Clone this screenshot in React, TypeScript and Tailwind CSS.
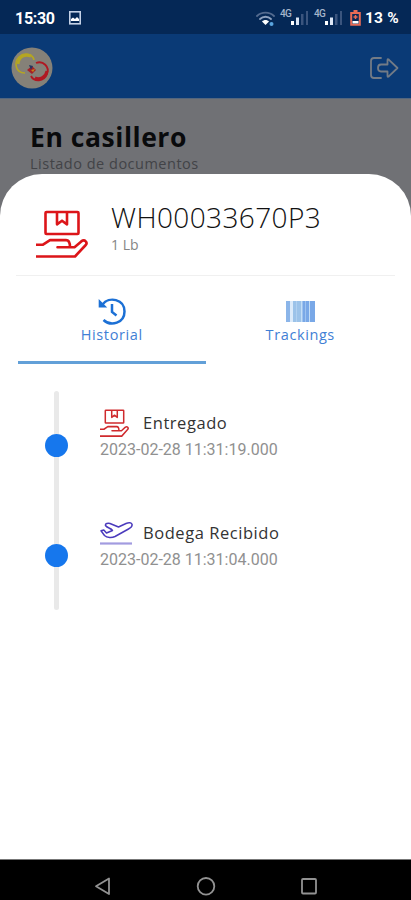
import clsx from 'clsx';

const events = [
  { title: 'Entregado', date: '2023-02-28 11:31:19.000', icon: 'hand' },
  { title: 'Bodega Recibido', date: '2023-02-28 11:31:04.000', icon: 'plane' },
];

function HandBoxIcon({ className }: { className?: string }) {
  return (
    <svg
      viewBox="0 0 52 47"
      preserveAspectRatio="none"
      fill="none"
      stroke="currentColor"
      strokeLinejoin="round"
      className={className}
    >
      <rect x="9.5" y="2" width="33" height="21.5" rx="1" />
      <path d="M21 2v12l5-3.500 5 3.500V2" />
      <path d="M0 34h7l7-4.500h16c3.500 0 4 4 4 7H21.500h17l6.500-5.500c4-3 7 1 4.500 3.500L39 45.500H0" />
    </svg>
  );
}

function PlaneIcon({ className }: { className?: string }) {
  return (
    <svg viewBox="0 0 33 25" fill="none" className={className}>
      <path
        d="M1 9.800l2.800-.8L6.500 12l6-2.500C11 7 7 7 5.500 4.500 5 2.500 8 2 10 2.500l8.500 3.500L26 2.500c3-1.200 5.500-.8 6 .8.5 2-1.500 3.700-3.500 4.700L15 15.500c-3 1.500-8 1.500-10.500-1L1 9.800z"
        stroke="#4b3bbd"
        strokeWidth="1.500"
        strokeLinejoin="round"
      />
      <path d="M0 22.500h32" stroke="#a29be0" strokeWidth="2.200" />
    </svg>
  );
}

function Signal() {
  return (
    <div className="flex items-start">
      <span className="-mt-px w-[11px] text-[10px] leading-[10px] font-medium tracking-[-0.8px] text-[#a6b5cb]">4G</span>
      <svg viewBox="0 0 18 16" className="h-4 w-[18px]">
        <path d="M0 11h3v4H0z" fill="#fff" />
        <path d="M5 7.500h3V15H5z" fill="#dce6f5" />
        <path d="M10 4h2.500v11H10zM15 1h2v14h-2z" fill="#3b557e" />
      </svg>
    </div>
  );
}

function StatusBar() {
  return (
    <div className="flex h-[34px] items-center bg-[#052856] pl-[15px] font-['Roboto',sans-serif] text-white">
      <span className="w-[54px] pt-[3px] text-[16px] leading-5 font-bold tracking-[-0.300px]">15:30</span>
      <svg viewBox="0 0 12 14" className="mt-0.5 h-3.5 w-3" fill="none">
        <rect x=".8" y=".8" width="10.400" height="12" stroke="#c4d1e6" strokeWidth="1.600" />
        <path d="M2 10V8l2-1.500L6 8l2-2 2 2v2z" fill="#fff" />
      </svg>
      <svg viewBox="0 0 19 17" className="mt-1 ml-[175px] h-[17px] w-[19px]" fill="none" strokeLinecap="round">
        <path d="M1 5c4.500-4.500 12.500-4.500 17 0" stroke="#546b8f" strokeWidth="1.800" />
        <path d="M4 8c3-3 8-3 11 0" stroke="#8fa2bf" strokeWidth="1.800" />
        <path d="M6 10.500c2-2 5-2 7 0L9.500 14z" fill="#fff" />
        <circle cx="15.500" cy="13" r="2" fill="#5aa5df" />
      </svg>
      <div className="mt-px ml-[5px] flex gap-[5px]">
        <Signal />
        <Signal />
      </div>
      <svg viewBox="0 0 11 16" className="mt-0.5 ml-[7px] h-4 w-[11px]" fill="none">
        <path d="M3.500 0h4v2h-4z" fill="#e86b55" />
        <path d="M1.200 3h8.600v11.800H1.200z" stroke="#e86b55" strokeWidth="2" />
        <path d="M5.500 5v4M3.500 7h4" stroke="#e86b55" strokeWidth="1.500" />
        <path d="M2.500 11h6v2.500h-6z" fill="#fff" />
      </svg>
      <span className="ml-[4px] pt-[2px] text-[15.500px] leading-5 font-bold whitespace-nowrap tracking-[0.200px]">13 %</span>
    </div>
  );
}

function Header() {
  return (
    <header className="flex h-[65px] items-center justify-between border-b border-[#53667f] bg-[#0a3a76] pr-[12px] pl-[11px]">
      <svg viewBox="0 0 42 42" className="mt-[3px] h-[42px] w-[42px]" fill="none">
        <circle cx="21" cy="21" r="20.500" fill="#858178" />
        <path d="M14 26C4 26 3 15 8 10c5-5 14-3 15 3" stroke="#b5a622" strokeWidth="1.700" />
        <path d="M7 17C8 9 14 7 20 9" stroke="#b5a622" strokeWidth="3" />
        <path d="M25 16c7-3 14 4 11 11-3 8-13 8-16 2" stroke="#b01822" strokeWidth="1.900" />
        <path d="M36 24c-1 6-7 9-12 7" stroke="#b01822" strokeWidth="3" />
        <path d="M16 23l5-4 4 4-4 4z" fill="#a51f25" />
        <path d="M18 18l4 1-2 4z" fill="#26355f" />
        <path d="M20 23l4-1-2 3z" fill="#c78119" />
      </svg>
      <svg viewBox="0 0 29 22" className="mt-[4px] h-[22px] w-[29px]" fill="none" stroke="#737b86" strokeWidth="1.800" strokeLinejoin="round" strokeLinecap="round">
        <path d="M11 1H4Q1 1 1 4v14q0 3 3 3h7" />
        <path d="M11 7.500h6.500V3Q17.500 1.500 19 2.800L27.500 11 19 19.200q-1.500 1.300-1.500-.2v-4.500H11q-3 0-3-3.500 0-3.500 3-3.500z" />
      </svg>
    </header>
  );
}

function HistoryIcon() {
  return (
    <svg viewBox="0 0 28 28" className="h-7 w-7" fill="none" stroke="#1c70d5">
      <path d="M4.500 7.500C11-1 26.500 2 26.500 14.500 26.500 26 13 30 5.500 23" strokeWidth="2.500" />
      <path d="M.7 2l8.500 8.500H.7z" fill="#1c70d5" stroke="none" />
      <path d="M14 7v8l4.500 3.500" strokeWidth="2.500" />
    </svg>
  );
}

function BarcodeIcon() {
  return (
    <svg viewBox="0 0 29 21" className="mt-[4px] mb-[3px] h-[21px] w-[29px]">
      <path d="M4 0h3v21H4z" fill="#dcebfa" />
      <path d="M0 0h4v21H0z" fill="#8bb5e9" />
      <path d="M7 0h9v21H7z" fill="#9cc3e9" />
      <path d="M16 0h13v21H16z" fill="#79a8e7" />
      <path d="M10.500 0h.5v21h-.5zM15 0h1.500v21H15zM19.500 0h.5v21h-.5zM23 0h1v21h-1z" fill="#c4def7" />
    </svg>
  );
}

export default function App() {
  return (
    <div className="flex h-[900px] w-[411px] flex-col overflow-hidden bg-[#707175] font-['Open_Sans',sans-serif]">
      <StatusBar />
      <Header />

      <div className="h-[75px] shrink-0 pt-[21px] pl-[30px]">
        <h1 className="h-[34px] text-[26.500px] leading-[35px] font-bold tracking-[0.550px] whitespace-nowrap text-[#090a0c]">En casillero</h1>
        <p className="text-[14.500px] leading-[20px] tracking-[0.500px] whitespace-nowrap text-[#424347]">Listado de documentos</p>
      </div>

      <main className="flex-1 rounded-t-[42px] bg-white">
        <div className="mx-4 flex h-[102px] border-b border-[#f0f0f0] pt-[36px] pl-5">
          <HandBoxIcon className="h-[48px] w-[52px] stroke-[2.600] text-[#dc1519]" />
          <div className="ml-[23px]">
            <h2 className="mt-[-10px] h-[35px] text-[28px] leading-[34px] font-light tracking-[0.400px] whitespace-nowrap text-[#111]">WH00033670P3</h2>
            <p className="text-[14px] leading-[20px] text-[#858585]">1 Lb</p>
          </div>
        </div>

        <div className="mx-[18px] grid h-[88px] grid-cols-2 text-[14.500px] leading-[20px] text-[#3f80d5]">
          <div className="flex flex-col items-center border-b-[3px] border-[#62a0d8] pt-[21px]">
            <HistoryIcon />
            <span className="tracking-[0.600px]">Historial</span>
          </div>
          <div className="flex flex-col items-center pt-[21px] pl-[2px]">
            <BarcodeIcon />
            <span className="tracking-[0.600px]">Trackings</span>
          </div>
        </div>

        <div className="mt-[27px] ml-[45px]">
          {events.map((event, i) => (
            <div key={event.title} className="flex">
              <div className="flex w-[23px] flex-col items-center">
                <div className={clsx('h-[43px] w-[5px] bg-[#e9e9e9]', i === 0 && 'rounded-t-full')} />
                <div className="h-[23px] w-[23px] rounded-full bg-[#1677ed]" />
                <div className={clsx('w-[5px] bg-[#e9e9e9]', i === 0 ? 'h-[44px]' : 'h-[43px] rounded-b-full')} />
              </div>
              <div className="ml-8 pt-[17px]">
                <div className="flex h-[30px] items-center">
                  <div className="w-[43px]">
                    {event.icon === 'hand' ? (
                      <HandBoxIcon className="h-[28px] w-[29px] stroke-[2.700] text-[#cf2a2d]" />
                    ) : (
                      <PlaneIcon className="h-[25px] w-[33px]" />
                    )}
                  </div>
                  <span className="text-[16.500px] leading-[22px] tracking-[0.550px] whitespace-nowrap text-[#333]">{event.title}</span>
                </div>
                <p className="mt-[2px] font-['Roboto',sans-serif] text-[16px] leading-[20px] whitespace-nowrap text-[#909090]">{event.date}</p>
              </div>
            </div>
          ))}
        </div>
      </main>

      <nav className="h-[41px] shrink-0 border-t border-[#777] bg-black">
        <svg viewBox="0 0 411 40" className="h-10 w-full" fill="none" stroke="#929292" strokeWidth="1.800" strokeLinejoin="round">
          <path d="M109 18.500v15.500L96 26.300z" />
          <circle cx="206" cy="26.300" r="8.300" />
          <rect x="302" y="19" width="14" height="14.500" rx="1" />
        </svg>
      </nav>
    </div>
  );
}
